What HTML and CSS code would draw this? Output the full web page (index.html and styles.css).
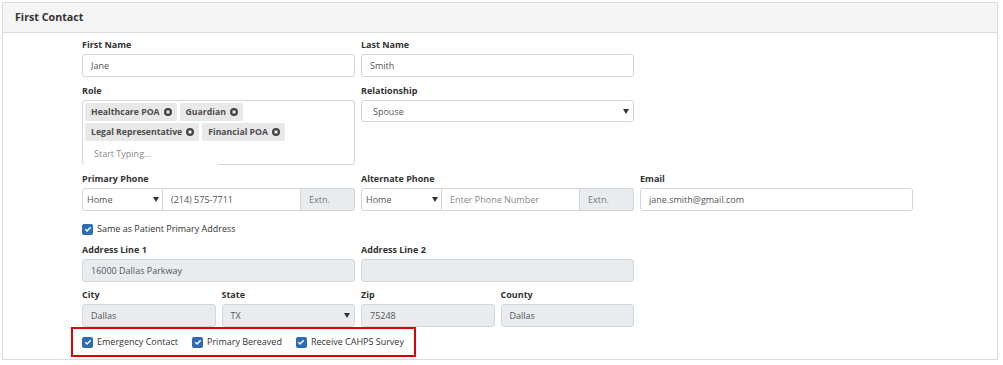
FILE: index.html
```html
<!DOCTYPE html>
<html lang="en">
<head>
    <meta charset="UTF-8">
    <meta name="viewport" content="width=device-width, initial-scale=1.0">
    <title>First Contact</title>
    <link rel="stylesheet" href="styles.css">
</head>
<body>
    <div class="panel">
        <div class="panel-heading">First Contact</div>
        <div class="panel-body">
            <div class="form-grid">
                <div class="field span-2 row-start">
                    <label>First Name</label>
                    <input type="text" class="control" value="Jane">
                </div>
                <div class="field span-2">
                    <label>Last Name</label>
                    <input type="text" class="control" value="Smith">
                </div>

                <div class="field span-2 row-start">
                    <label>Role</label>
                    <div class="tag-box">
                        <div class="tags">
                            <span class="tag">Healthcare POA <svg class="tag-x" viewBox="0 0 8 8"><circle cx="4" cy="4" r="4"/><path d="M2.6 2.6l2.8 2.8M5.4 2.6l-2.8 2.8"/></svg></span>
                            <span class="tag">Guardian <svg class="tag-x" viewBox="0 0 8 8"><circle cx="4" cy="4" r="4"/><path d="M2.6 2.6l2.8 2.8M5.4 2.6l-2.8 2.8"/></svg></span>
                            <span class="tag">Legal Representative <svg class="tag-x" viewBox="0 0 8 8"><circle cx="4" cy="4" r="4"/><path d="M2.6 2.6l2.8 2.8M5.4 2.6l-2.8 2.8"/></svg></span>
                            <span class="tag">Financial POA <svg class="tag-x" viewBox="0 0 8 8"><circle cx="4" cy="4" r="4"/><path d="M2.6 2.6l2.8 2.8M5.4 2.6l-2.8 2.8"/></svg></span>
                        </div>
                        <input type="text" class="tag-input" placeholder="Start Typing...">
                    </div>
                </div>
                <div class="field span-2">
                    <label>Relationship</label>
                    <div class="control select select-wide">
                        <span>Spouse</span>
                        <span class="caret"></span>
                    </div>
                </div>

                <div class="field span-2 row-start">
                    <label>Primary Phone</label>
                    <div class="input-group">
                        <div class="control select phone-type">
                            <span>Home</span>
                            <span class="caret"></span>
                        </div>
                        <input type="text" class="control phone" value="(214) 575-7711">
                        <span class="addon">Extn.</span>
                    </div>
                </div>
                <div class="field span-2">
                    <label>Alternate Phone</label>
                    <div class="input-group">
                        <div class="control select phone-type">
                            <span>Home</span>
                            <span class="caret"></span>
                        </div>
                        <input type="text" class="control phone" placeholder="Enter Phone Number">
                        <span class="addon">Extn.</span>
                    </div>
                </div>
                <div class="field span-2">
                    <label>Email</label>
                    <input type="text" class="control" value="jane.smith@gmail.com">
                </div>

                <div class="check-row span-6 row-start same-address">
                    <label class="check"><span class="box"><svg viewBox="0 0 10 10"><path d="M2.3 5.2l1.8 1.8 3.6-3.8"/></svg></span>Same as Patient Primary Address</label>
                </div>

                <div class="field span-2 row-start">
                    <label>Address Line 1</label>
                    <input type="text" class="control" value="16000 Dallas Parkway" disabled>
                </div>
                <div class="field span-2">
                    <label>Address Line 2</label>
                    <input type="text" class="control" value="" disabled>
                </div>

                <div class="field city-row row-start">
                    <label>City</label>
                    <input type="text" class="control" value="Dallas" disabled>
                </div>
                <div class="field city-row">
                    <label>State</label>
                    <div class="control select disabled">
                        <span>TX</span>
                        <span class="caret"></span>
                    </div>
                </div>
                <div class="field city-row">
                    <label>Zip</label>
                    <input type="text" class="control" value="75248" disabled>
                </div>
                <div class="field city-row">
                    <label>County</label>
                    <input type="text" class="control" value="Dallas" disabled>
                </div>

                <div class="flags span-6 row-start">
                    <label class="check"><span class="box"><svg viewBox="0 0 10 10"><path d="M2.3 5.2l1.8 1.8 3.6-3.8"/></svg></span>Emergency Contact</label>
                    <label class="check"><span class="box"><svg viewBox="0 0 10 10"><path d="M2.3 5.2l1.8 1.8 3.6-3.8"/></svg></span>Primary Bereaved</label>
                    <label class="check"><span class="box"><svg viewBox="0 0 10 10"><path d="M2.3 5.2l1.8 1.8 3.6-3.8"/></svg></span>Receive CAHPS Survey</label>
                </div>
            </div>
        </div>
    </div>
</body>
</html>
```

FILE: styles.css
```css
body {
    margin: 0;
    font-family: "Open Sans", Arial, sans-serif;
    color: #333;
    background: #fff;
}
.panel {
    margin: 2px 5px 0 2px;
    border: 1px solid #dcdcdc;
    box-shadow: 0 1px 2px rgba(0,0,0,0.06);
}
.panel-heading {
    height: 29px;
    line-height: 29px;
    padding-left: 12px;
    background: #f5f5f5;
    border-bottom: 1px solid #dcdcdc;
    font-size: 10.7px;
    font-weight: bold;
    color: #333;
}
.panel-body {
    padding: 4px 0 2px 79px;
}
.form-grid {
    display: grid;
    grid-template-columns: repeat(6, 133.5px);
    column-gap: 6px;
    row-gap: 6px;
    align-items: start;
    font-size: 9px;
}
.span-2 {
    grid-column-end: span 2;
}
.span-6 {
    grid-column-end: span 6;
}
.row-start {
    grid-column-start: 1;
}
.field label {
    display: block;
    height: 15px;
    line-height: 15px;
    margin-bottom: 2px;
    font-size: 9px;
    font-weight: bold;
    color: #333;
}
.control {
    display: block;
    box-sizing: border-box;
    width: 100%;
    height: 23px;
    margin: 0;
    padding: 0 8px;
    border: 1px solid #d2d5d9;
    border-radius: 3px;
    background: #fff;
    font-family: "Open Sans", Arial, sans-serif;
    font-size: 9px;
    color: #555;
    outline: none;
}
.control::placeholder {
    color: #8a8a8a;
}
.control:disabled,
.control.disabled {
    background: #e9ecef;
    border-color: #d3d7dc;
    color: #555;
}
.select {
    display: flex;
    align-items: center;
    justify-content: space-between;
    padding-right: 4px;
}
.select-wide {
    height: 22px;
    padding-left: 11px;
}
.caret {
    width: 0;
    height: 0;
    border-left: 3px solid transparent;
    border-right: 3px solid transparent;
    border-top: 5px solid #333;
}

/* role tags */
.tag-box {
    box-sizing: border-box;
    height: 65px;
    padding: 2px 2px 0;
    border: 1px solid #d2d5d9;
    border-radius: 3px;
    background: #fff;
}
.tags {
    display: flex;
    flex-wrap: wrap;
    gap: 2px 3px;
}
.tag {
    display: inline-flex;
    align-items: center;
    gap: 4px;
    height: 18px;
    padding: 0 5px 0 6px;
    border-radius: 2px;
    background: #e8e8e8;
    font-size: 8.7px;
    font-weight: bold;
    color: #4d4d4d;
}
.tag-x {
    width: 8px;
    height: 8px;
}
.tag-x circle {
    fill: #444;
}
.tag-x path {
    stroke: #fff;
    stroke-width: 1.3;
    fill: none;
}
.tag-input {
    display: block;
    box-sizing: border-box;
    width: 134px;
    height: 24px;
    margin: 0 0 -1px -1px;
    padding: 0 0 0 10px;
    border: none;
    background: #fff;
    font-family: "Open Sans", Arial, sans-serif;
    font-size: 9px;
    outline: none;
}
.tag-input::placeholder {
    color: #8a8a8a;
}

/* phone groups */
.input-group {
    display: flex;
}
.input-group .control {
    border-radius: 0;
}
.phone-type {
    flex: 0 0 81px;
    padding-left: 4px;
    padding-right: 3px;
    border-radius: 3px 0 0 3px !important;
}
.phone {
    flex: 1;
    min-width: 0;
    border-left: none;
}
.addon {
    box-sizing: border-box;
    flex: 0 0 54px;
    height: 23px;
    line-height: 21px;
    padding-left: 8px;
    border: 1px solid #d2d5d9;
    border-left: none;
    border-radius: 0 3px 3px 0;
    background: #e9ecef;
    font-size: 9px;
    color: #777;
}

/* checkboxes */
.check {
    display: inline-flex;
    align-items: center;
    gap: 4px;
    font-size: 9px;
    color: #333;
    line-height: 16px;
}
.box {
    display: inline-flex;
    align-items: center;
    justify-content: center;
    width: 11px;
    height: 11px;
    border-radius: 2px;
    background: #2d6cb4;
}
.box svg {
    width: 10px;
    height: 10px;
}
.box path {
    fill: none;
    stroke: #fff;
    stroke-width: 1.5;
}
.same-address {
    display: flex;
    margin: 4px 0 -1px;
    height: 16px;
}
.city-row {
    margin-top: -1px;
}
.flags {
    justify-self: start;
    display: flex;
    gap: 14px;
    margin: -6px 0 0 -11px;
    padding: 0 10px 0 9px;
    height: 26px;
    align-items: center;
    border: 2px solid #e30000;
}
```
